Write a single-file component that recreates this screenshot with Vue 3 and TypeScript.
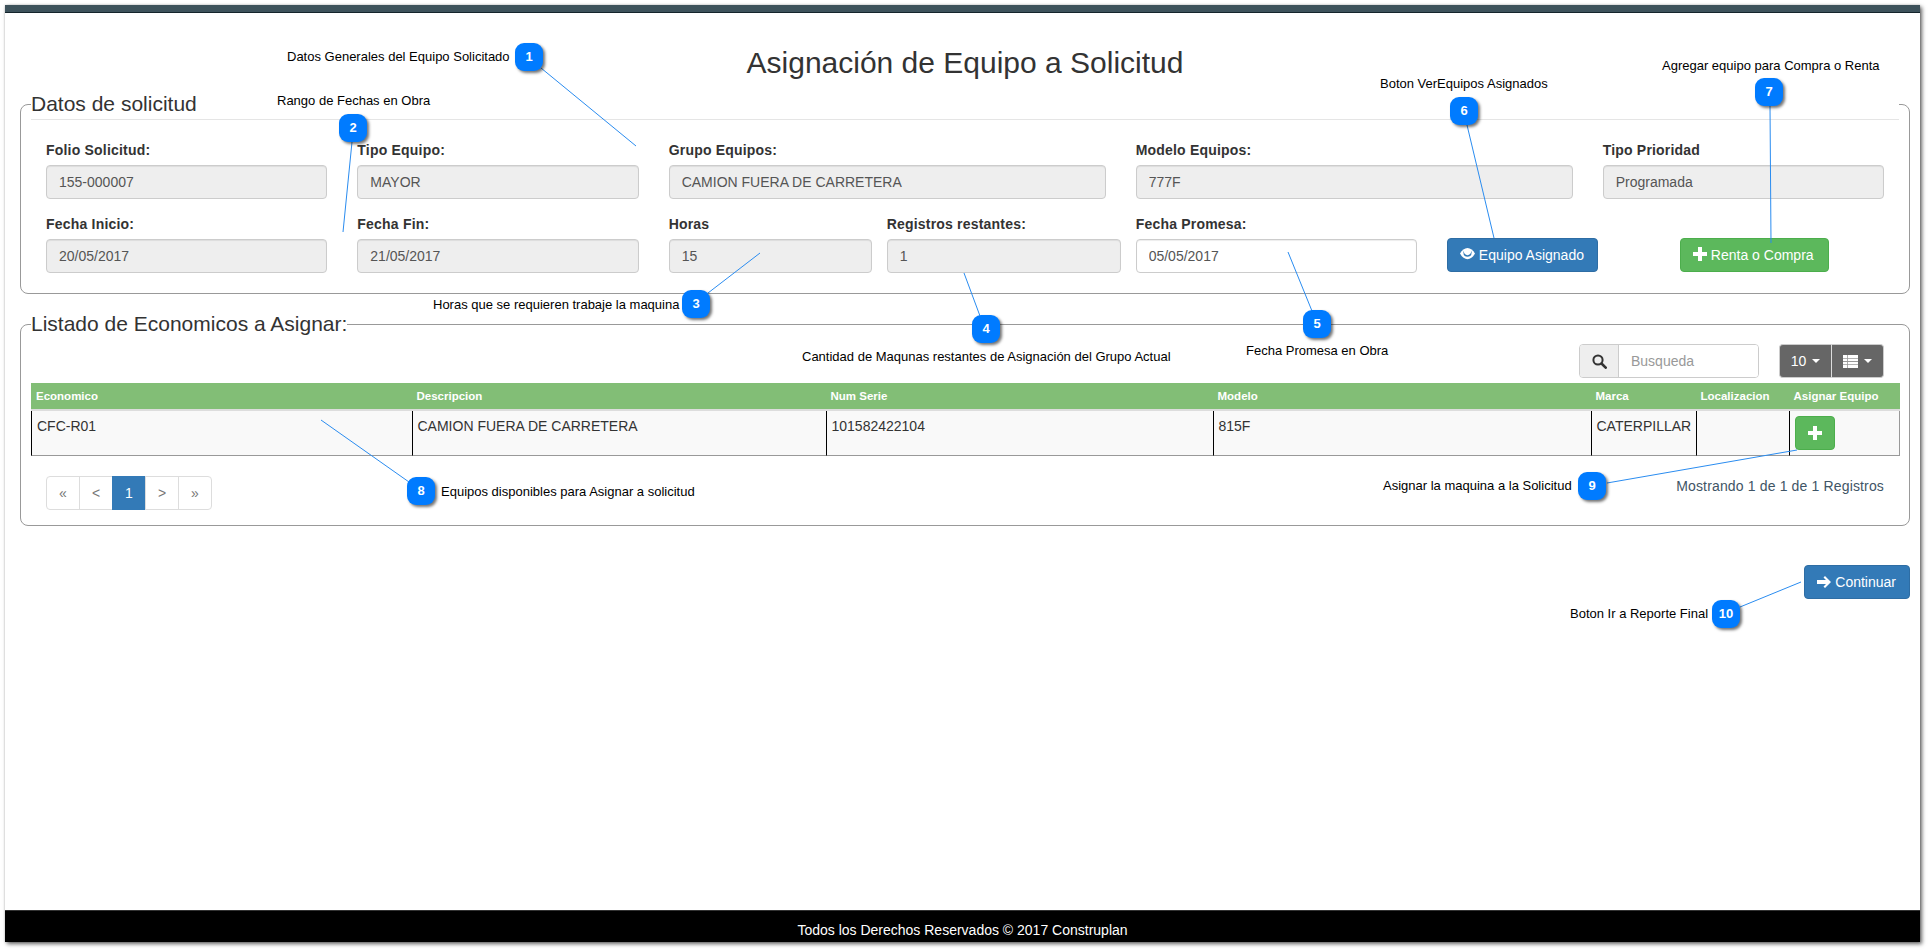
<script setup lang="ts">
interface Note {
  n: number
  x: number
  y: number
  line: [number, number, number, number]
  text: string
  textX: number
  textY: number
}

const notes: Note[] = [
  { n: 1, x: 529, y: 57, line: [541, 68, 636, 146], text: "Datos Generales del Equipo Solicitado", textX: 287, textY: 57 },
  { n: 2, x: 353, y: 128, line: [352, 142, 343, 232], text: "Rango de Fechas en Obra", textX: 277, textY: 101 },
  { n: 3, x: 696, y: 304, line: [760, 253, 708, 293], text: "Horas que se requieren trabaje la maquina", textX: 433, textY: 305 },
  { n: 4, x: 986, y: 329, line: [964, 273, 980, 316], text: "Cantidad de Maqunas restantes de Asignación del Grupo Actual", textX: 802, textY: 357 },
  { n: 5, x: 1317, y: 324, line: [1288, 252, 1312, 311], text: "Fecha Promesa en Obra", textX: 1246, textY: 351 },
  { n: 6, x: 1464, y: 111, line: [1467, 125, 1494, 238], text: "Boton VerEquipos Asignados", textX: 1380, textY: 84 },
  { n: 7, x: 1769, y: 92, line: [1770, 106, 1771, 243], text: "Agregar equipo para Compra o Renta", textX: 1662, textY: 66 },
  { n: 8, x: 421, y: 491, line: [321, 420, 409, 482], text: "Equipos disponibles para Asignar a solicitud", textX: 441, textY: 492 },
  { n: 9, x: 1592, y: 486, line: [1607, 483, 1797, 450], text: "Asignar la maquina a la Solicitud", textX: 1383, textY: 486 },
  { n: 10, x: 1726, y: 614, line: [1740, 607, 1801, 582], text: "Boton Ir a Reporte Final", textX: 1570, textY: 614 },
]

const columns = ["Economico", "Descripcion", "Num Serie", "Modelo", "Marca", "Localizacion", "Asignar Equipo"]
const row = ["CFC-R01", "CAMION FUERA DE CARRETERA", "101582422104", "815F", "CATERPILLAR", ""]
const pages = ["«", "<", "1", ">", "»"]
</script>

<template>
  <div class="stage">
    <div class="window">
      <div class="topbar"></div>
      <main class="content">
        <h2 class="title">Asignación de Equipo a Solicitud</h2>

        <fieldset class="box">
          <legend class="ruled">Datos de solicitud</legend>
          <div class="form-row">
            <div class="field col2"><label>Folio Solicitud:</label><input readonly value="155-000007" /></div>
            <div class="field col2"><label>Tipo Equipo:</label><input readonly value="MAYOR" /></div>
            <div class="field col3"><label>Grupo Equipos:</label><input readonly value="CAMION FUERA DE CARRETERA" /></div>
            <div class="field col3"><label>Modelo Equipos:</label><input readonly value="777F" /></div>
            <div class="field col2"><label>Tipo Prioridad</label><input readonly value="Programada" /></div>
          </div>
          <div class="form-row">
            <div class="field col2"><label>Fecha Inicio:</label><input readonly value="20/05/2017" /></div>
            <div class="field col2"><label>Fecha Fin:</label><input readonly value="21/05/2017" /></div>
            <div class="field horas"><label>Horas</label><input readonly value="15" /></div>
            <div class="field registros"><label>Registros restantes:</label><input readonly value="1" /></div>
            <div class="field col2"><label>Fecha Promesa:</label><input class="open" readonly value="05/05/2017" /></div>
            <div class="actions">
              <button class="btn blue">
                <svg class="ico eye" width="15" height="13" viewBox="0 0 16 13">
                  <path fill="#fff" d="M0 6.500C2 2.800 5 .5 8 .5s6 2.300 8 6c-2 3.700-5 6-8 6s-6-2.300-8-6z" />
                  <path fill="#337ab7" d="M3.600 5.500a4.400 4.400 0 0 0 8.800 0c0-.8-.2-1.500-.5-2.100.4 2.800-1.500 4.900-3.900 4.900S3.700 6.200 4.100 3.400c-.3.600-.5 1.300-.5 2.100z" />
                </svg>
                Equipo Asignado
              </button>
              <button class="btn green renta">
                <svg class="ico" width="14" height="14" viewBox="0 0 14 14"><path fill="#fff" d="M5 0h4v5h5v4H9v5H5V9H0V5h5z" /></svg>
                Renta o Compra
              </button>
            </div>
          </div>
        </fieldset>

        <fieldset class="box second">
          <legend>Listado de Economicos a Asignar:</legend>
          <div class="toolbar">
            <div class="search">
              <span class="addon">
                <svg width="15" height="15" viewBox="0 0 15 15">
                  <circle cx="6" cy="6" r="4.600" fill="none" stroke="#333" stroke-width="2" />
                  <path d="M9.500 9.500l4.200 4.200" stroke="#333" stroke-width="2.600" stroke-linecap="round" />
                </svg>
              </span>
              <input placeholder="Busqueda" />
            </div>
            <div class="btn-group">
              <button class="grey first">10 <span class="caret"></span></button>
              <button class="grey">
                <svg width="15" height="13" viewBox="0 0 15 13">
                  <path fill="#fff" d="M0 0h15v13H0z" />
                  <path fill="#9a9a9a" d="M0 3h15v.8H0zM0 6.100h15v.8H0zM0 9.200h15v.8H0zM4 0h.8v13H4z" />
                </svg>
                <span class="caret"></span>
              </button>
            </div>
          </div>

          <table class="grid">
            <colgroup>
              <col class="c1" /><col class="c2" /><col class="c3" /><col class="c4" /><col class="c5" /><col class="c6" /><col class="c7" />
            </colgroup>
            <thead>
              <tr><th v-for="c in columns" :key="c">{{ c }}</th></tr>
            </thead>
            <tbody>
              <tr>
                <td v-for="(v, i) in row" :key="i">{{ v }}</td>
                <td>
                  <button class="btn green add">
                    <svg width="14" height="14" viewBox="0 0 14 14"><path fill="#fff" d="M5 0h4v5h5v4H9v5H5V9H0V5h5z" /></svg>
                  </button>
                </td>
              </tr>
            </tbody>
          </table>

          <div class="table-foot">
            <ul class="pagination">
              <li v-for="p in pages" :key="p" :class="{ active: p === '1' }">{{ p }}</li>
            </ul>
            <span class="count">Mostrando 1 de 1 de 1 Registros</span>
          </div>
        </fieldset>

        <div class="next">
          <button class="btn blue">
            <svg class="ico" width="14" height="12" viewBox="0 0 14 12"><path fill="#fff" d="M8 0l6 6-6 6-1.500-1.500L9 8H0V4h9L6.500 1.500z" /></svg>
            Continuar
          </button>
        </div>
      </main>
      <footer class="footer">Todos los Derechos Reservados © 2017 Construplan</footer>
    </div>

    <svg class="lines" width="1928" height="951">
      <line
        v-for="a in notes"
        :key="a.n"
        :x1="a.line[0]"
        :y1="a.line[1]"
        :x2="a.line[2]"
        :y2="a.line[3]"
        stroke="#2a8cf0"
        stroke-width="1"
      />
    </svg>
    <template v-for="a in notes" :key="a.n">
      <span class="note" :style="{ left: a.textX + 'px', top: a.textY - 8 + 'px' }">{{ a.text }}</span>
      <span class="badge" :style="{ left: a.x - 14 + 'px', top: a.y - 14 + 'px' }">{{ a.n }}</span>
    </template>
  </div>
</template>

<style scoped>
.stage {
  position: relative;
  width: 1928px;
  height: 951px;
  overflow: hidden;
  background: #fff;
  font-family: "Liberation Sans", Arial, sans-serif;
  font-size: 14px;
  line-height: 20px;
  color: #333;
}
.window {
  margin: 5px 0 0 5px;
  width: 1915px;
  height: 937px;
  display: flex;
  flex-direction: column;
  background: #fff;
  box-shadow: 2px 2px 4px rgba(0, 0, 0, 0.6), 0 0 2px rgba(0, 0, 0, 0.2);
}
.topbar {
  height: 7px;
  background: #3d525b;
  border-bottom: 1px solid #14242b;
}
.content {
  flex: 1;
  padding: 0 10px 0 15px;
}
.title {
  margin: 33px 0 10px;
  font-size: 30px;
  font-weight: 400;
  line-height: 33px;
  text-align: center;
}
.box {
  margin: 0;
  padding: 0 10px 5px;
  min-width: 0;
  border: 1px solid #999;
  border-radius: 8px;
}
.second {
  margin-top: 15px;
}
legend {
  padding: 0;
  font-size: 21px;
  line-height: 30px;
}
legend.ruled {
  width: 100%;
  margin-bottom: 20px;
  border-bottom: 1px solid #e5e5e5;
}
.form-row {
  display: flex;
}
.field {
  flex: none;
  box-sizing: border-box;
  padding: 0 15px;
  margin-bottom: 15px;
}
.col2 {
  width: 311.33px;
}
.col3 {
  width: 467px;
}
.horas {
  width: 218px;
  padding-right: 0;
}
.registros {
  width: 249px;
  padding-right: 0;
}
label {
  display: block;
  margin-bottom: 5px;
  font-weight: 700;
  letter-spacing: 0.2px;
}
.field input {
  display: block;
  box-sizing: border-box;
  width: 100%;
  height: 34px;
  padding: 6px 12px;
  border: 1px solid #ccc;
  border-radius: 4px;
  background: #eee;
  box-shadow: inset 0 1px 1px rgba(0, 0, 0, 0.075);
  color: #555;
  font: inherit;
  outline: none;
}
.field input.open {
  background: #fff;
}
.actions {
  display: flex;
  align-items: flex-start;
  padding: 24px 0 0 15px;
}
.btn {
  height: 34px;
  padding: 6px 13px 6px 12px;
  border: 1px solid transparent;
  border-radius: 4px;
  color: #fff;
  font: inherit;
  white-space: nowrap;
}
.blue {
  background: #337ab7;
  border-color: #2e6da4;
}
.green {
  background: #5cb85c;
  border-color: #4cae4c;
}
.renta {
  margin-left: 82px;
  padding-right: 14px;
}
.ico {
  vertical-align: -1px;
}
.ico.eye {
  vertical-align: 0;
}
.toolbar {
  display: flex;
  justify-content: flex-end;
  gap: 20px;
  margin: 5px 0;
  padding-right: 15px;
}
.search {
  display: flex;
  width: 180px;
  height: 34px;
  box-sizing: border-box;
  border: 1px solid #ccc;
  border-radius: 4px;
  overflow: hidden;
}
.addon {
  flex: none;
  display: flex;
  align-items: center;
  justify-content: center;
  width: 38px;
  background: #eee;
  border-right: 1px solid #ccc;
}
.search input {
  flex: 1;
  min-width: 0;
  padding: 0 12px;
  border: none;
  outline: none;
  font: inherit;
}
.search input::placeholder {
  color: #999;
}
.btn-group {
  display: flex;
  width: 105px;
  height: 34px;
}
.grey {
  flex: 1;
  display: flex;
  align-items: center;
  justify-content: center;
  gap: 4px;
  padding: 0;
  border: 1px solid #ccc;
  border-left: none;
  border-radius: 0 4px 4px 0;
  background: #666;
  color: #fff;
  font: inherit;
}
.grey.first {
  border-left: 1px solid #ccc;
  border-right: 1px solid #ddd;
  border-radius: 4px 0 0 4px;
}
.caret {
  width: 0;
  height: 0;
  margin-left: 2px;
  border-top: 4px solid #fff;
  border-left: 4px solid transparent;
  border-right: 4px solid transparent;
}
.grid {
  width: 1868.5px;
  table-layout: fixed;
  border-collapse: separate;
  border-spacing: 0;
}
.c1 { width: 380.5px; }
.c2 { width: 414px; }
.c3 { width: 387px; }
.c4 { width: 378px; }
.c5 { width: 105px; }
.c6 { width: 93px; }
.c7 { width: 111px; }
th {
  height: 26px;
  padding: 0 5px;
  background: #82be76;
  border-bottom: 2px solid #ddd;
  color: #fff;
  font-size: 11.5px;
  font-weight: 700;
  text-align: left;
  white-space: nowrap;
}
td {
  height: 44px;
  box-sizing: border-box;
  padding: 5px;
  background: #f9f9f9;
  border-left: 1px solid #000;
  border-bottom: 1px solid #999;
  vertical-align: top;
  white-space: nowrap;
}
td:last-child {
  border-right: 1px solid #999;
}
.add {
  display: flex;
  align-items: center;
  justify-content: center;
  width: 40px;
  padding: 0;
}
.table-foot {
  display: flex;
  justify-content: space-between;
  margin-top: 20px;
  padding: 0 15px;
}
.pagination {
  display: flex;
  margin: 0 0 10px;
  padding: 0;
  list-style: none;
}
.pagination li {
  width: 34px;
  height: 34px;
  box-sizing: border-box;
  margin-left: -1px;
  border: 1px solid #ddd;
  color: #777;
  line-height: 32px;
  text-align: center;
}
.pagination li:first-child {
  margin-left: 0;
  border-radius: 4px 0 0 4px;
}
.pagination li:last-child {
  border-radius: 0 4px 4px 0;
}
.pagination li.active {
  background: #337ab7;
  border-color: #337ab7;
  color: #fff;
}
.count {
  color: #3f5566;
  letter-spacing: 0.15px;
}
.next {
  display: flex;
  justify-content: flex-end;
  margin-top: 39px;
}
.footer {
  height: 32px;
  box-sizing: border-box;
  border-top: 1px solid #333;
  background: #000;
  color: #fff;
  line-height: 38px;
  text-align: center;
}
.lines {
  position: absolute;
  top: 0;
  left: 0;
  pointer-events: none;
}
.note {
  position: absolute;
  color: #000;
  font-size: 13px;
  line-height: 16px;
  white-space: nowrap;
}
.badge {
  position: absolute;
  width: 28px;
  height: 28px;
  border-radius: 9px;
  background: #007bff;
  box-shadow: 2px 2px 3px rgba(0, 0, 0, 0.55);
  color: #fff;
  font-size: 13px;
  font-weight: 700;
  line-height: 28px;
  text-align: center;
}
</style>
